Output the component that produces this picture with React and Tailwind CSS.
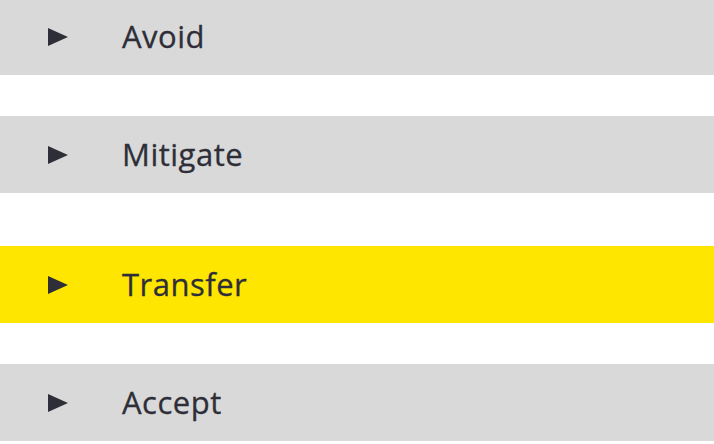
const items = [
  { label: 'Avoid', bg: 'bg-[#d9d9d9]', mt: '-mt-[2px]' },
  { label: 'Mitigate', bg: 'bg-[#d9d9d9]', mt: 'mt-[41px]' },
  { label: 'Transfer', bg: 'bg-[#ffe600]', mt: 'mt-[53px]' },
  { label: 'Accept', bg: 'bg-[#d9d9d9]', mt: 'mt-[41px]' },
];

export default function App() {
  return (
    <div className="w-[714px] h-[444px] overflow-hidden bg-white font-['Open_Sans',sans-serif]">
      {items.map((item) => (
        <div key={item.label} className={`${item.mt} ${item.bg} h-[77px] flex items-center`}>
          <svg className="ml-[48px] w-[20px] h-[18px] shrink-0" viewBox="0 0 20 18">
            <polygon points="0,0 20,9 0,18" fill="#2e2e38" />
          </svg>
          <span className="ml-[54px] text-[31px] font-medium tracking-[0.5px] text-[#2e2e38] leading-none [-webkit-text-stroke:0.3px_#2e2e38]">{item.label}</span>
        </div>
      ))}
    </div>
  );
}
